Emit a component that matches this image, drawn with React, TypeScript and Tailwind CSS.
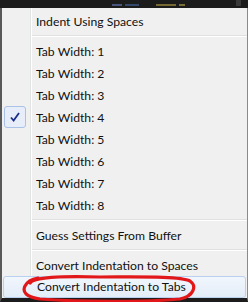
import React from "react";

type Item =
  | { kind: "item"; label: string; checked?: boolean; active?: boolean }
  | { kind: "sep" };

const ITEMS: Item[] = [
  { kind: "item", label: "Indent Using Spaces" },
  { kind: "sep" },
  { kind: "item", label: "Tab Width: 1" },
  { kind: "item", label: "Tab Width: 2" },
  { kind: "item", label: "Tab Width: 3" },
  { kind: "item", label: "Tab Width: 4", checked: true },
  { kind: "item", label: "Tab Width: 5" },
  { kind: "item", label: "Tab Width: 6" },
  { kind: "item", label: "Tab Width: 7" },
  { kind: "item", label: "Tab Width: 8" },
  { kind: "sep" },
  { kind: "item", label: "Guess Settings From Buffer" },
  { kind: "sep" },
  { kind: "item", label: "Convert Indentation to Spaces" },
  { kind: "item", label: "Convert Indentation to Tabs", active: true },
];

export default function App() {
  return (
    <div className="relative w-[248px] h-[302px] overflow-hidden bg-[#1e1e1e] flex flex-col font-['Lato',sans-serif]">
      {/* editor strip behind the menu */}
      <div className="h-[8px] flex items-end gap-[3px] pl-[112px] pb-[2px] bg-[#1c1c1c]">
        <span className="w-[10px] h-[2px] bg-[#5b6fa8] opacity-70" />
        <span className="w-[14px] h-[2px] bg-[#3f5d8a] opacity-70" />
        <span className="w-[20px] h-[2px] ml-[14px] bg-[#9c8a3c] opacity-70" />
        <span className="w-[6px] h-[2px] bg-[#b7a54a] opacity-60" />
        <span className="w-[5px] h-[8px] ml-[48px] bg-[#3a3a3a]" />
      </div>

      {/* menu */}
      <div className="flex-1 flex flex-col border-l-2 border-l-[#595959] border-r border-r-[#8a8a8a] border-b-4 border-b-[#1c1c1c] pt-[2px] bg-[linear-gradient(to_right,#f0f0f0_28px,#e2e3e3_28px,#e2e3e3_29px,#ffffff_29px,#ffffff_30px,#f0f0f0_30px)] text-[12.2px] leading-none text-[#111]">
        {ITEMS.map((item, i) => {
          if (item.kind === "sep") {
            return (
              <div key={i} className="h-[8px] pl-[30px] pt-[3px]">
                <div className="h-[1px] bg-[#e0e0e0]" />
                <div className="h-[1px] bg-white" />
              </div>
            );
          }
          if (item.active) {
            return (
              <div
                key={i}
                className="h-[22px] ml-[1px] mr-[1px] flex items-center pt-[1px] pl-[33px] rounded-[3px] border border-[#b9d1ef] bg-[linear-gradient(to_bottom,#f1f6fc,#e3edf9)]"
              >
                {item.label}
              </div>
            );
          }
          return (
            <div key={i} className="h-[22px] flex items-center">
              <div className="w-[34px] h-full flex items-center">
                {item.checked && (
                  <div className="ml-[2px] w-[22px] h-[22px] rounded-[3px] border border-[#a9c2e6] bg-[#e7eef9] flex items-center justify-center">
                    <svg width="12" height="12" viewBox="0 0 12 12">
                      <path d="M2 6.5 L4.6 9.5 L10 2" fill="none" stroke="#1c2f8c" strokeWidth="1.8" />
                    </svg>
                  </div>
                )}
              </div>
              <span className="pt-[2px]">{item.label}</span>
            </div>
          );
        })}
      </div>

      {/* red hand-drawn circle */}
      <svg className="absolute left-0 top-0 pointer-events-none" width="248" height="302" viewBox="0 0 248 302">
        <path
          d="M30 283 C 34 277, 60 276, 100 277 C 140 277, 180 276, 190 281 C 197 286, 194 296, 180 299 C 150 302, 80 302, 40 299 C 26 297, 22 292, 25 286 C 27 282, 32 279, 38 278"
          fill="none"
          stroke="#e2171a"
          strokeWidth="3.2"
          strokeLinecap="round"
        />
      </svg>
    </div>
  );
}
